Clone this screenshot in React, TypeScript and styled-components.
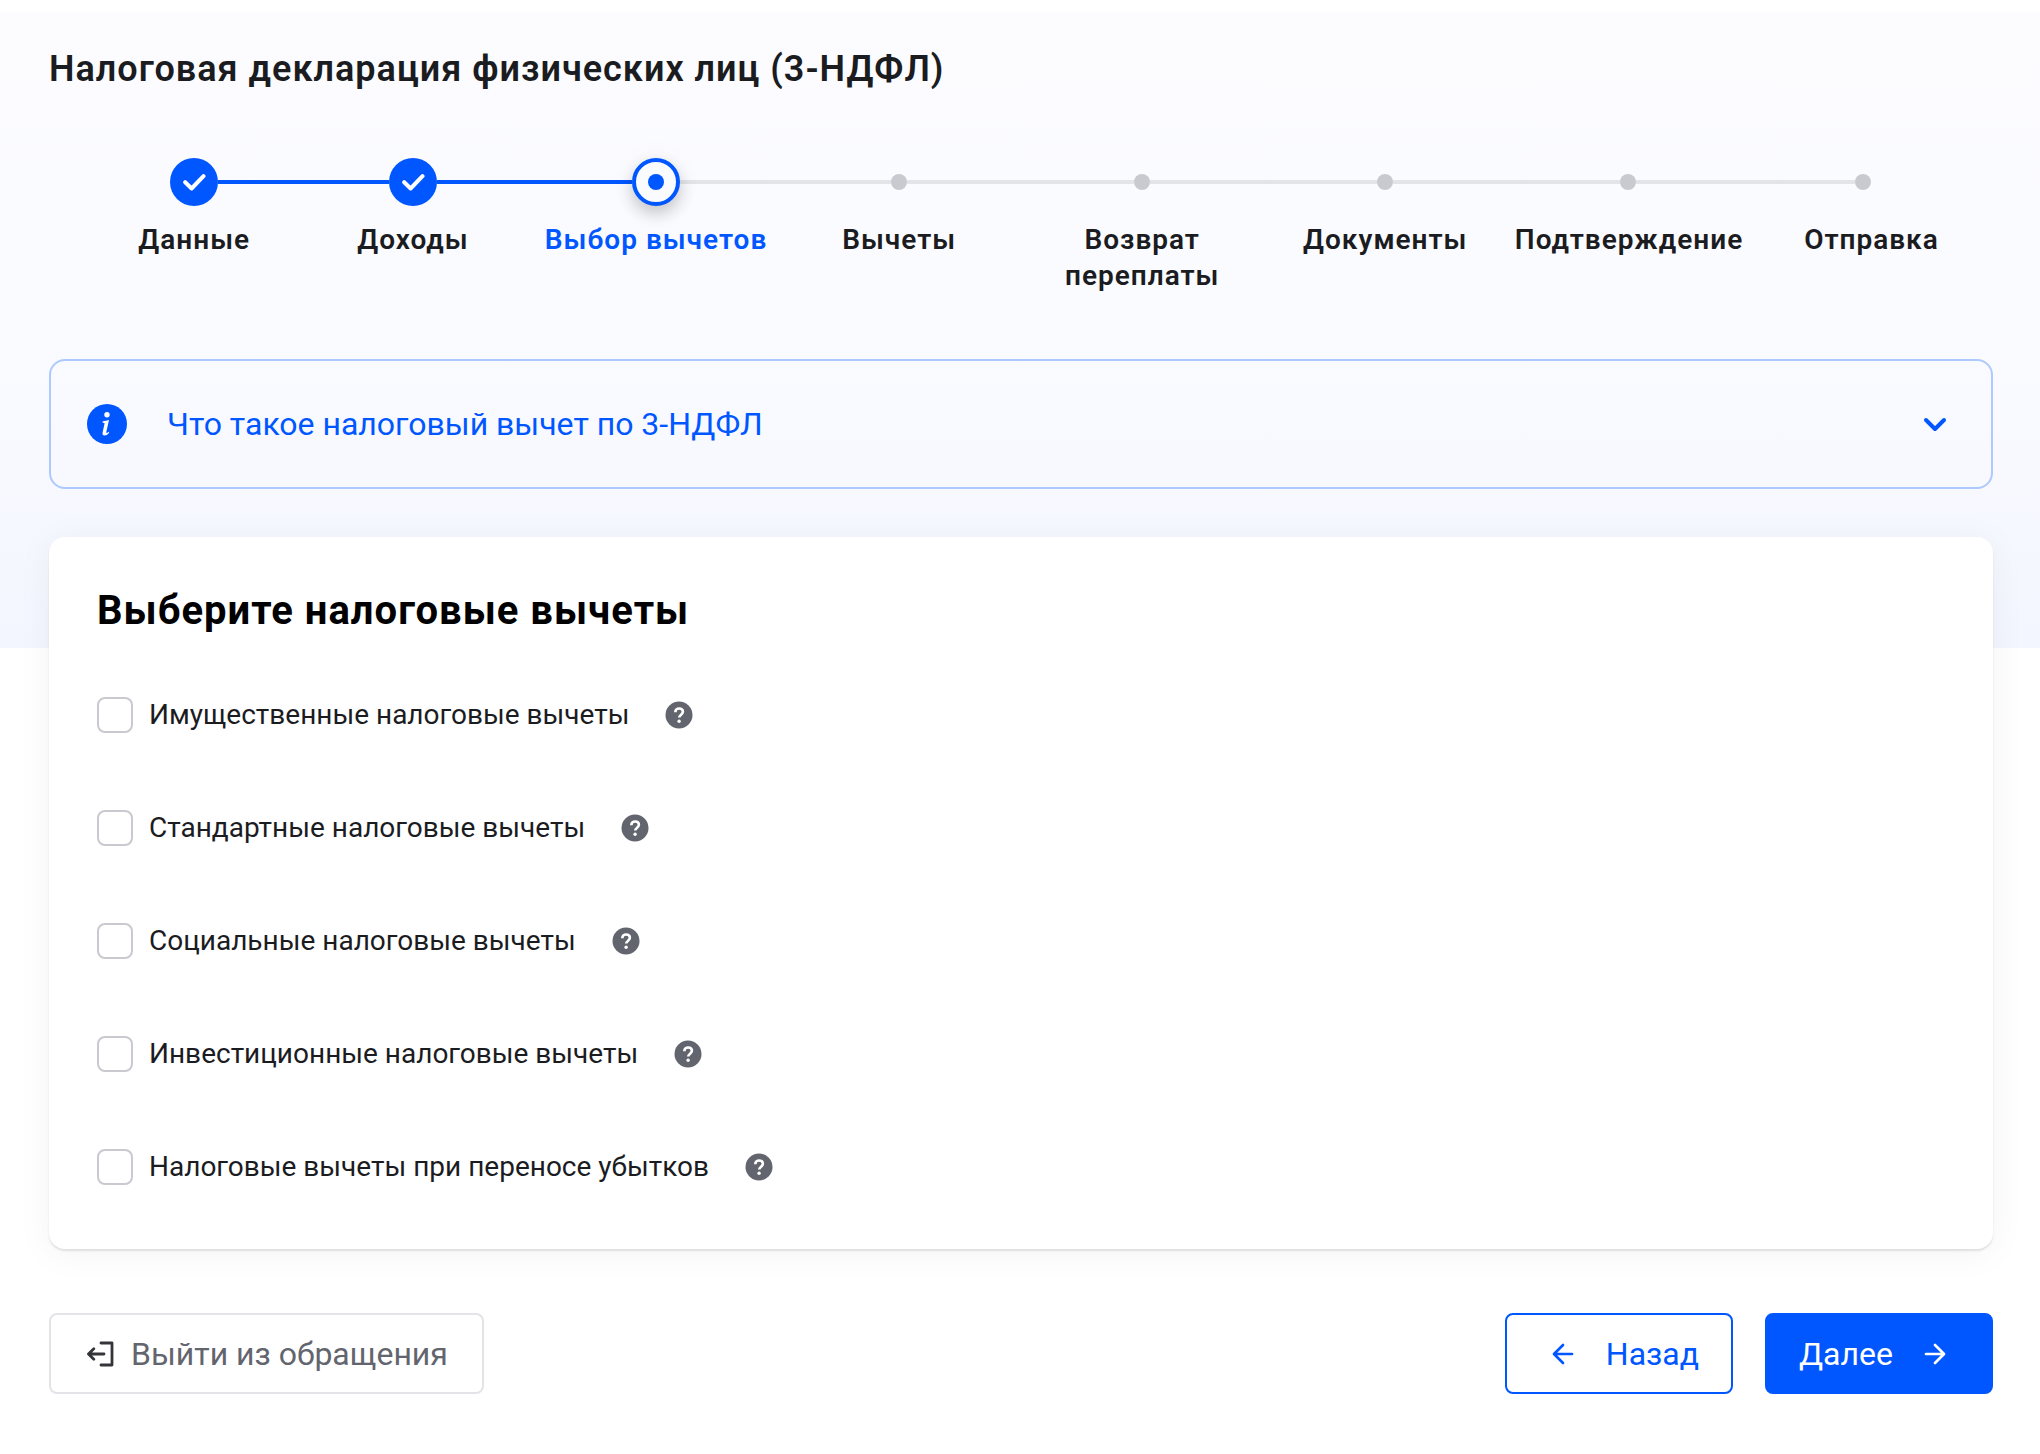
import React, { useState } from 'react';
import styled, { createGlobalStyle, css } from 'styled-components';

const blue = '#0057ff';
const ink = '#1b1c1f';

const GlobalStyle = createGlobalStyle`
  *, *::before, *::after { box-sizing: border-box; }
  body {
    margin: 0;
    background: #fff;
    color: ${ink};
    font-family: Roboto, "Noto Sans", sans-serif;
    font-size: 28px;
    line-height: 36px;
  }
  button { font: inherit; cursor: pointer; }
`;

const Page = styled.div`
  padding-top: 12px;
  background: linear-gradient(#fcfcff, #f9faff 400px, #f3f6ff) 0 12px / 100% 636px no-repeat;
`;

const Content = styled.main`
  display: flex;
  flex-direction: column;
  padding: 33px 47px 60px 49px;
`;

const PageTitle = styled.h1`
  margin: 0;
  font-size: 36px;
  line-height: 48px;
  font-weight: 600;
  letter-spacing: 1px;
`;

const Steps = styled.ol`
  display: grid;
  grid-template-columns: 4fr repeat(7, 5fr);
  margin: 65px 0 0;
  padding: 0 0 0 48px;
  list-style: none;
`;

const Step = styled.li`
  display: flex;
  flex-direction: column;
  gap: 16px;
  min-width: 0;
`;

const Track = styled.div`
  display: flex;
  align-items: center;
  height: 48px;
`;

type LineKind = 'done' | 'todo' | 'none';

const Line = styled.span<{ $kind: LineKind; $inset?: boolean }>`
  flex: 1;
  height: 4px;
  margin-left: ${(p) => (p.$inset ? '16px' : '0')};
  background: ${(p) => ({ done: blue, todo: '#e3e4e8', none: 'transparent' })[p.$kind]};
`;

type State = 'done' | 'current' | 'todo';

const markerLook = {
  done: css`
    width: 48px;
    height: 48px;
    background: ${blue};
  `,
  current: css`
    z-index: 1;
    width: 48px;
    height: 48px;
    border: 4px solid ${blue};
    background: #fafbff;
    box-shadow: 0 8px 16px rgba(0, 0, 0, 0.2), 0 0 32px rgba(0, 0, 0, 0.04);
  `,
  todo: css`
    width: 16px;
    height: 16px;
    background: #c9cad0;
  `,
};

const Marker = styled.span<{ $state: State }>`
  display: grid;
  place-items: center;
  flex: none;
  border-radius: 50%;
  ${(p) => markerLook[p.$state]}
`;

const Bullet = styled.span`
  width: 16px;
  height: 16px;
  border-radius: 50%;
  background: ${blue};
`;

const StepLabel = styled.span<{ $active: boolean }>`
  padding: 0 8px;
  color: ${(p) => (p.$active ? blue : ink)};
  font-weight: 600;
  letter-spacing: 1px;
  text-align: center;
`;

const InfoBar = styled.button`
  display: flex;
  align-items: center;
  height: 130px;
  margin-top: 65px;
  padding: 0 40px 0 36px;
  border: 2px solid #adc9ff;
  border-radius: 16px;
  background: transparent;
  color: ${blue};
  font-size: 32px;
  line-height: 40px;
  text-align: left;
`;

const InfoText = styled.span`
  flex: 1;
  margin-left: 40px;
`;

const Card = styled.section`
  display: flex;
  flex-direction: column;
  margin-top: 48px;
  padding: 48px 48px 64px;
  border-radius: 16px;
  background: #fff;
  box-shadow: 0 2px 2px rgba(0, 0, 0, 0.1), 0 4px 36px rgba(0, 0, 0, 0.05);
`;

const CardTitle = styled.h2`
  margin: 0 0 60px;
  color: #000;
  font-size: 40px;
  line-height: 52px;
  font-weight: 700;
  letter-spacing: 1px;
`;

const Options = styled.ul`
  display: flex;
  flex-direction: column;
  gap: 77px;
  margin: 0;
  padding: 0;
  list-style: none;
`;

const Option = styled.li`
  display: flex;
  align-items: center;
  gap: 36px;
  height: 36px;
`;

const OptionLabel = styled.label`
  display: flex;
  align-items: center;
  gap: 16px;
  cursor: pointer;
`;

const CheckBox = styled.input`
  appearance: none;
  flex: none;
  width: 36px;
  height: 36px;
  margin: 0;
  border: 2px solid #c9cad0;
  border-radius: 8px;
  background: #fff;
  &:checked {
    border-color: ${blue};
    background: ${blue};
  }
`;

const HelpButton = styled.button`
  display: flex;
  padding: 0;
  border: 0;
  background: none;
  color: #62656e;
`;

const Footer = styled.footer`
  display: flex;
  gap: 32px;
  margin-top: 64px;
`;

const buttonLook = {
  exit: css`
    margin-right: auto;
    padding: 0 34px 0 36px;
    border-color: #e3e4e8;
    color: #62656e;
    gap: 16px;
  `,
  back: css`
    width: 228px;
    padding: 0 32px 0 40px;
    border-color: ${blue};
    color: ${blue};
    justify-content: space-between;
  `,
  next: css`
    width: 228px;
    padding: 0 40px 0 32px;
    border-color: ${blue};
    background: ${blue};
    color: #fff;
    justify-content: space-between;
  `,
};

const Button = styled.button<{ $look: keyof typeof buttonLook }>`
  display: flex;
  align-items: center;
  height: 81px;
  border: 2px solid;
  border-radius: 8px;
  background: #fff;
  font-size: 32px;
  line-height: 40px;
  ${(p) => buttonLook[p.$look]}
`;

const stroke = {
  fill: 'none',
  stroke: 'currentColor',
  strokeLinecap: 'round',
  strokeLinejoin: 'round',
} as const;

const CheckIcon = () => (
  <svg width="24" height="24" viewBox="0 0 24 24" {...stroke} stroke="#fff" strokeWidth="4" aria-hidden="true">
    <path d="M3.200 12.200 9.600 18.500 21.500 6.200" />
  </svg>
);

const InfoIcon = () => (
  <svg width="40" height="40" viewBox="0 0 40 40" aria-hidden="true">
    <circle cx="20" cy="20" r="20" fill={blue} />
    <circle cx="20" cy="10.8" r="2.7" fill="#fff" />
    <path
      d="M15.800 17.200c2-.2 4.200-.6 6.200-1.200l-2.700 12.100c-.1.800.2 1 .7.800.6-.3 1-.6 1.500-1.100l.7.600c-1.200 1.900-2.700 3-4.500 3-1.900 0-2.500-1.200-2.100-3l1.900-8.700c.1-.6-.2-.9-.9-.9h-1.100z"
      fill="#fff"
    />
  </svg>
);

const ChevronIcon = () => (
  <svg width="32" height="32" viewBox="0 0 32 32" {...stroke} strokeWidth="4" aria-hidden="true">
    <path d="M7 12 16 21 25 12" />
  </svg>
);

const HelpIcon = () => (
  <svg width="28" height="28" viewBox="0 0 28 28" {...stroke} aria-hidden="true">
    <circle cx="14" cy="14" r="13.500" fill="currentColor" stroke="none" />
    <path d="M10.300 11.200c0-2.200 1.600-3.700 3.800-3.700s3.800 1.300 3.800 3.300c0 2.800-3.700 2.900-3.700 5.700" stroke="#fff" strokeWidth="2.600" strokeLinecap="butt" />
    <circle cx="14.100" cy="20.300" r="1.700" fill="#fff" stroke="none" />
  </svg>
);

const ExitIcon = () => (
  <svg width="28" height="28" viewBox="0 0 28 28" {...stroke} stroke="#34353a" strokeWidth="2.800" aria-hidden="true">
    <path d="M14 3H25v22H14M17 14H1.500M6.800 8.700 1.500 14l5.300 5.300" />
  </svg>
);

const ArrowIcon = ({ back = false }: { back?: boolean }) => (
  <svg width="32" height="32" viewBox="0 0 32 32" {...stroke} strokeWidth="2.700" aria-hidden="true">
    <path d={back ? 'M25 16H7.500M16 7 7 16l9 9' : 'M7 16h17.500M16 7l9 9-9 9'} />
  </svg>
);

const steps: { label: string; state: State }[] = [
  { label: 'Данные', state: 'done' },
  { label: 'Доходы', state: 'done' },
  { label: 'Выбор вычетов', state: 'current' },
  { label: 'Вычеты', state: 'todo' },
  { label: 'Возврат переплаты', state: 'todo' },
  { label: 'Документы', state: 'todo' },
  { label: 'Подтверждение', state: 'todo' },
  { label: 'Отправка', state: 'todo' },
];

const options = [
  'Имущественные налоговые вычеты',
  'Стандартные налоговые вычеты',
  'Социальные налоговые вычеты',
  'Инвестиционные налоговые вычеты',
  'Налоговые вычеты при переносе убытков',
];

export default function App() {
  const [checked, setChecked] = useState<Record<string, boolean>>({});

  return (
    <Page>
      <GlobalStyle />
      <Content>
        <PageTitle>Налоговая декларация физических лиц (3-НДФЛ)</PageTitle>

        <Steps>
          {steps.map(({ label, state }, i) => {
            const first = i === 0;
            const last = i === steps.length - 1;
            return (
              <Step key={label} aria-current={state === 'current' ? 'step' : undefined}>
                <Track>
                  <Line $kind={first ? 'none' : state === 'todo' ? 'todo' : 'done'} />
                  <Marker $state={state}>
                    {state === 'done' && <CheckIcon />}
                    {state === 'current' && <Bullet />}
                  </Marker>
                  <Line $kind={last ? 'none' : state === 'done' ? 'done' : 'todo'} $inset={last} />
                </Track>
                <StepLabel $active={state === 'current'}>{label}</StepLabel>
              </Step>
            );
          })}
        </Steps>

        <InfoBar type="button" aria-expanded="false">
          <InfoIcon />
          <InfoText>Что такое налоговый вычет по 3-НДФЛ</InfoText>
          <ChevronIcon />
        </InfoBar>

        <Card>
          <CardTitle>Выберите налоговые вычеты</CardTitle>
          <Options>
            {options.map((text) => (
              <Option key={text}>
                <OptionLabel>
                  <CheckBox
                    type="checkbox"
                    checked={!!checked[text]}
                    onChange={(e) => setChecked({ ...checked, [text]: e.target.checked })}
                  />
                  {text}
                </OptionLabel>
                <HelpButton type="button" aria-label="Справка">
                  <HelpIcon />
                </HelpButton>
              </Option>
            ))}
          </Options>
        </Card>

        <Footer>
          <Button type="button" $look="exit">
            <ExitIcon />
            Выйти из обращения
          </Button>
          <Button type="button" $look="back">
            <ArrowIcon back />
            Назад
          </Button>
          <Button type="button" $look="next">
            Далее
            <ArrowIcon />
          </Button>
        </Footer>
      </Content>
    </Page>
  );
}
